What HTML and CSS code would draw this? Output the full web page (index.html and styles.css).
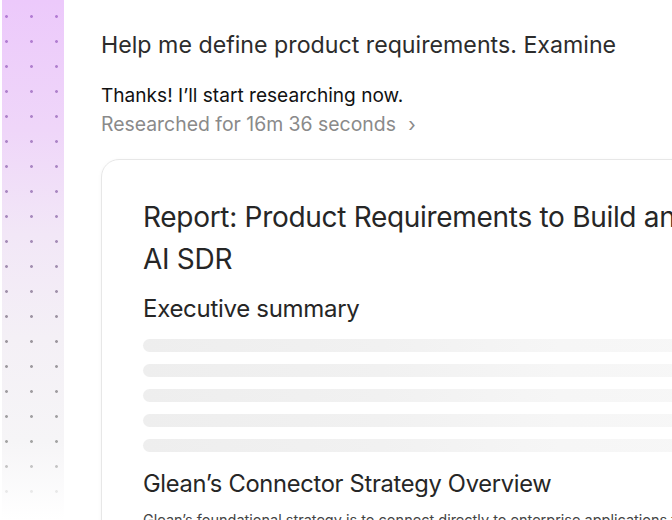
FILE: index.html
```html
<!DOCTYPE html>
<html lang="en">
<head>
<meta charset="utf-8">
<title>Research report</title>
<link rel="stylesheet" href="styles.css">
</head>
<body>
<div class="page">
  <aside class="rail"><div class="dots"></div></aside>
  <main class="chat">
    <p class="prompt">Help me define product requirements. Examine</p>
    <p class="reply">Thanks! I’ll start researching now.</p>
    <p class="status">Researched for 16m 36 seconds <span class="chev">›</span></p>
    <section class="card">
      <h1 class="title">Report: Product Requirements to Build an AI SDR</h1>
      <h2 class="section">Executive summary</h2>
      <div class="skeleton">
        <div class="bar"></div>
        <div class="bar"></div>
        <div class="bar"></div>
        <div class="bar"></div>
        <div class="bar"></div>
      </div>
      <h2 class="section section-two">Glean’s Connector Strategy Overview</h2>
      <p class="body">Glean’s foundational strategy is to connect directly to enterprise applications to centralize knowledge</p>
    </section>
  </main>
</div>
</body>
</html>
```

FILE: styles.css
```css
html, body {
  margin: 0;
  padding: 0;
  background: #ffffff;
}
body {
  width: 672px;
  height: 520px;
  overflow: hidden;
  font-family: Inter, "Liberation Sans", Arial, sans-serif;
}
.page {
  display: flex;
  height: 520px;
  overflow: hidden;
}
.rail {
  flex: 0 0 62px;
  margin-left: 2px;
  height: 520px;
  background: linear-gradient(to bottom, #ecc9fb 0%, #efd6f9 25%, #f2e7f7 45%, #f4f0f6 65%, #f6f5f7 85%, #ffffff 100%);
}
.dots {
  height: 100%;
  background: linear-gradient(to bottom, #b57cd6 0%, #a98ac0 40%, #9d979f 65%, #a5a5a5 85%, rgba(200,200,200,0) 97%);
  -webkit-mask-image: radial-gradient(circle at 12.5px 12.5px, #000 1.1px, transparent 1.7px);
  mask-image: radial-gradient(circle at 12.5px 12.5px, #000 1.1px, transparent 1.7px);
  -webkit-mask-size: 25px 25px;
  mask-size: 25px 25px;
  -webkit-mask-position: -8px 4px;
  mask-position: -8px 4px;
}
.chat {
  flex: 1 1 auto;
  padding: 30px 0 0 37px;
  min-width: 0;
  overflow: hidden;
}
.prompt {
  margin: 0;
  font-size: 23.2px;
  line-height: 30px;
  color: #2c2c2c;
  white-space: nowrap;
}
.reply {
  margin: 21px 0 0;
  font-size: 19.1px;
  line-height: 28px;
  color: #111111;
  white-space: nowrap;
}
.status {
  margin: 1px 0 0;
  font-size: 19.4px;
  line-height: 28px;
  color: #8a8a8a;
  white-space: nowrap;
}
.chev {
  margin-left: 7px;
}
.card {
  margin-top: 21px;
  width: 640px;
  height: 420px;
  box-sizing: border-box;
  border: 1px solid #e7e7e7;
  border-radius: 18px;
  box-shadow: 0 1px 4px rgba(0,0,0,0.04);
  padding: 36px 0 0 41px;
  overflow: hidden;
}
.title {
  margin: 0;
  width: 560px;
  font-size: 28px;
  line-height: 42px;
  font-weight: 400;
  color: #262626;
  letter-spacing: -0.3px;
}
.section {
  margin: 12px 0 0;
  font-size: 24px;
  line-height: 34px;
  font-weight: 400;
  color: #262626;
  letter-spacing: -0.3px;
  white-space: nowrap;
}
.skeleton {
  display: flex;
  flex-direction: column;
  gap: 12px;
  margin-top: 13px;
}
.bar {
  height: 13px;
  border-radius: 7px;
  background: linear-gradient(to right, #eeeeee 0%, #f1f1f1 40%, #f6f6f6 70%, #f7f7f7 100%);
}
.section-two {
  margin-top: 15px;
  font-size: 23.7px;
}
.body {
  margin: 8px 0 0;
  font-size: 14.5px;
  line-height: 22px;
  color: #444444;
  white-space: nowrap;
}
```
